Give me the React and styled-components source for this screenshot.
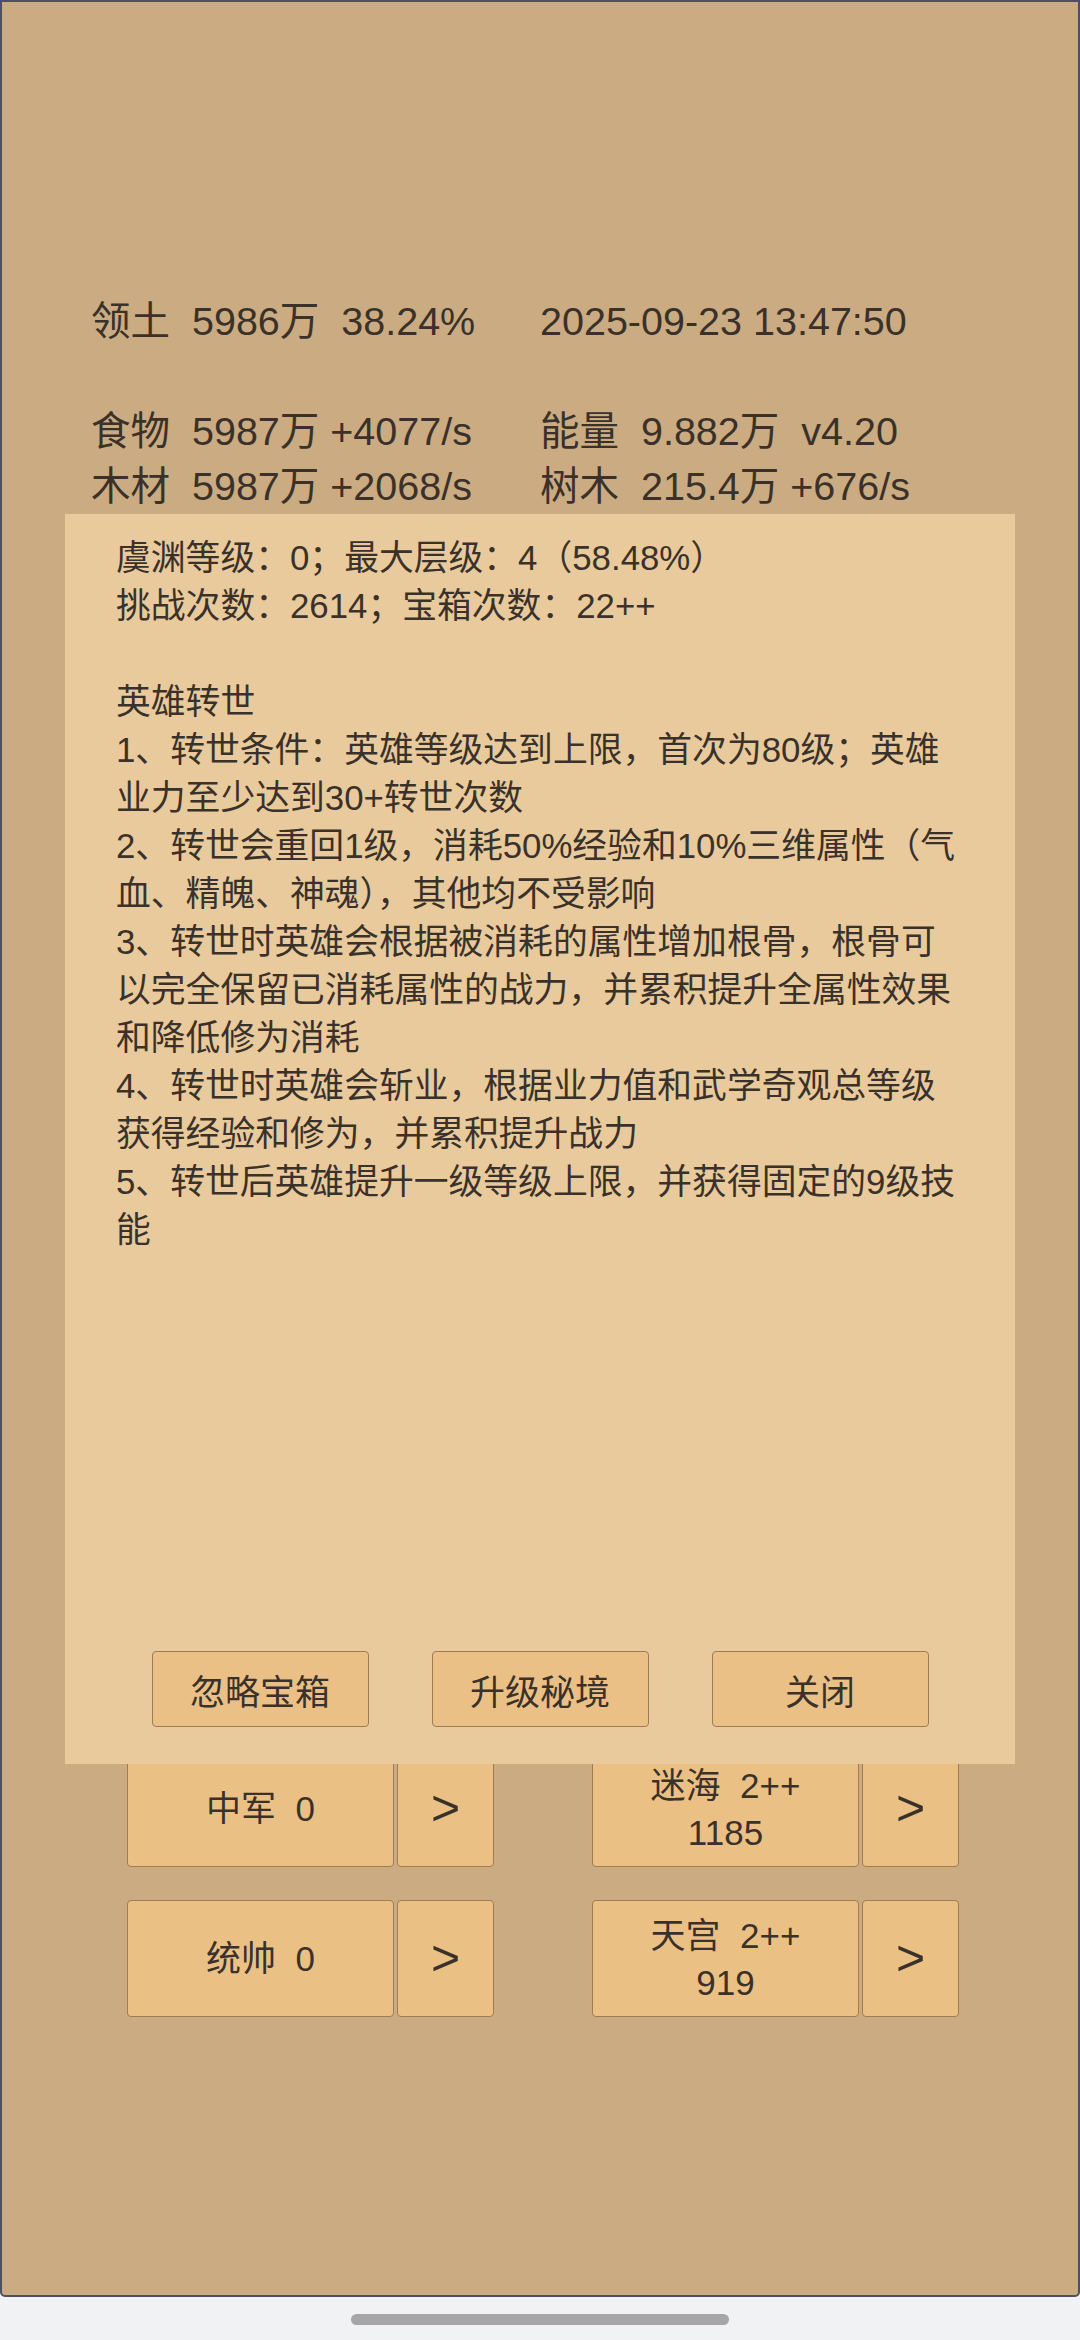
import React from 'react';
import styled, {createGlobalStyle} from 'styled-components';

const FONT = `"Liberation Sans", "Noto Sans CJK SC", sans-serif`;
const INK = '#3a322a';

const Global = createGlobalStyle`
  html, body {
    margin: 0;
    padding: 0;
    background: #f1f2f4;
  }
  body {
    font-family: ${FONT};
    color: ${INK};
  }
`;

const Frame = styled.div`
  position: relative;
  box-sizing: border-box;
  width: 1080px;
  height: 2297px;
  background: #cbab81;
  border: 2px solid #4f4e66;
  border-radius: 0 0 5px 5px;
  display: flex;
  flex-direction: column;
  overflow: hidden;
`;

const Stats = styled.div`
  display: grid;
  grid-template-columns: 449px auto;
  padding: 292px 0 0 89px;
  font-size: 39.5px;
  line-height: 55px;
  white-space: pre;
`;

const Blank = styled.div`
  grid-column: 1 / 3;
  height: 55px;
`;

const ButtonGrid = styled.div`
  display: grid;
  grid-template-columns: 367px 367px;
  column-gap: 98px;
  row-gap: 33px;
  justify-content: center;
  margin: 1236px 0 0 6px;
`;

const Group = styled.div`
  display: flex;
  gap: 3px;
  height: 117px;
`;

const Tile = styled.button`
  box-sizing: border-box;
  width: ${p => p.$w}px;
  height: 100%;
  padding: 0;
  background: #ebc085;
  border: 1px solid #9d7c56;
  border-radius: 4px;
  color: ${INK};
  font-family: ${FONT};
  font-size: ${p => (p.$arrow ? 50 : 35)}px;
  line-height: 47px;
  white-space: pre;
  text-align: center;
`;

const Dialog = styled.div`
  position: absolute;
  left: 63px;
  right: 63px;
  top: 512px;
  height: 1250px;
  box-sizing: border-box;
  background: #e9ca9c;
  padding: 20px 30px 37px 51px;
  display: flex;
  flex-direction: column;
`;

const DialogText = styled.div`
  font-size: 34.8px;
  line-height: 48px;
  white-space: pre-line;
`;

const DialogActions = styled.div`
  margin-top: auto;
  display: flex;
  justify-content: center;
  gap: 63px;
  margin-left: -21px;
`;

const ActionButton = styled.button`
  box-sizing: border-box;
  width: 217px;
  height: 76px;
  padding: 0;
  background: #eac087;
  border: 1px solid #9d7c56;
  border-radius: 4px;
  color: ${INK};
  font-family: ${FONT};
  font-size: 35px;
`;

const NavBar = styled.div`
  height: 43px;
  display: flex;
  align-items: center;
  justify-content: center;
`;

const Pill = styled.div`
  width: 378px;
  height: 11px;
  border-radius: 6px;
  background: #a6a6a8;
  margin-top: 1px;
`;

const stats = [
    ['领土  5986万  38.24%', '2025-09-23 13:47:50'],
    null,
    ['食物  5987万 +4077/s', '能量  9.882万  v4.20'],
    ['木材  5987万 +2068/s', '树木  215.4万 +676/s'],
];

const tiles = [
    {label: '中军  0'},
    {label: '迷海  2++\n1185'},
    {label: '统帅  0'},
    {label: '天宫  2++\n919'},
];

const info = [
    '虞渊等级：0；最大层级：4（58.48%）',
    '挑战次数：2614；宝箱次数：22++',
    '',
    '英雄转世',
    '1、转世条件：英雄等级达到上限，首次为80级；英雄',
    '业力至少达到30+转世次数',
    '2、转世会重回1级，消耗50%经验和10%三维属性（气',
    '血、精魄、神魂），其他均不受影响',
    '3、转世时英雄会根据被消耗的属性增加根骨，根骨可',
    '以完全保留已消耗属性的战力，并累积提升全属性效果',
    '和降低修为消耗',
    '4、转世时英雄会斩业，根据业力值和武学奇观总等级',
    '获得经验和修为，并累积提升战力',
    '5、转世后英雄提升一级等级上限，并获得固定的9级技',
    '能',
].join('\n');

export default function App() {
    return (
        <>
            <Global/>
            <Frame>
                <Stats>
                    {stats.map((row, i) => row
                        ? row.map((cell, j) => <div key={`${i}-${j}`}>{cell}</div>)
                        : <Blank key={i}/>
                    )}
                </Stats>
                <ButtonGrid>
                    {tiles.map(t => (
                        <Group key={t.label}>
                            <Tile $w={267}>{t.label}</Tile>
                            <Tile $w={97} $arrow>&gt;</Tile>
                        </Group>
                    ))}
                </ButtonGrid>
                <Dialog>
                    <DialogText>{info}</DialogText>
                    <DialogActions>
                        <ActionButton>忽略宝箱</ActionButton>
                        <ActionButton>升级秘境</ActionButton>
                        <ActionButton>关闭</ActionButton>
                    </DialogActions>
                </Dialog>
            </Frame>
            <NavBar>
                <Pill/>
            </NavBar>
        </>
    );
}
